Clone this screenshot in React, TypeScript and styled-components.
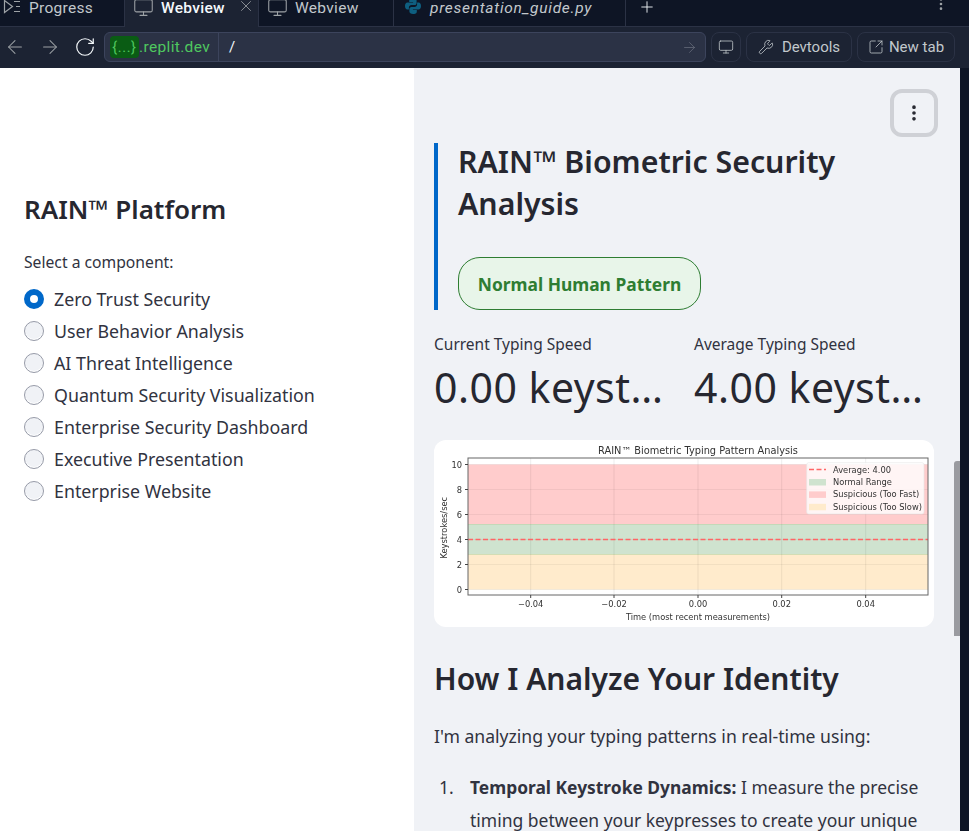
import React from "react";
import styled, { createGlobalStyle } from "styled-components";
import { ArrowLeft, ArrowRight, Monitor, RotateCw, Wrench, SquareArrowOutUpRight, Plus, X, EllipsisVertical } from "lucide-react";

const GlobalStyle = createGlobalStyle`
  html, body { margin: 0; padding: 0; height: 831px; overflow: hidden; background: #0e1525; }
  * { box-sizing: border-box; }
`;

const Shell = styled.div`
  width: 969px;
  height: 831px;
  display: flex;
  flex-direction: column;
  overflow: hidden;
  font-family: "Noto Sans", sans-serif;
`;

const TabBar = styled.div`
  height: 27px;
  flex: none;
  display: flex;
  background: #0e1525;
  border-bottom: 1px solid #2b3245;
`;

const Tab = styled.div<{ $width: number; $pad: number; $active?: boolean }>`
  width: ${(p) => p.$width}px;
  display: flex;
  align-items: flex-start;
  gap: 7px;
  padding-left: ${(p) => p.$pad}px;
  margin-bottom: ${(p) => (p.$active ? "-1px" : "0")};
  background: ${(p) => (p.$active ? "#1c2333" : "#0e1525")};
  border-right: 1px solid #2b3245;
  color: ${(p) => (p.$active ? "#f5f9fc" : "#c2c8cc")};
  font: ${(p) => (p.$active ? 500 : 400)} 15.5px/16px Roboto, sans-serif;
  letter-spacing: 0.3px;
  svg { flex: none; margin-top: -3px; }
`;

const TabLabel = styled.span<{ $italic?: boolean }>`
  flex: 1;
  font-style: ${(p) => (p.$italic ? "italic" : "normal")};
  letter-spacing: ${(p) => (p.$italic ? "0.72px" : "0.3px")};
  white-space: nowrap;
`;

const TabClose = styled(X)`
  margin-right: 3px;
  color: #9da2a6;
`;

const Spacer = styled.div`
  flex: 1;
`;

const NewTabIcon = styled(Plus)`
  margin: -2px 0 0 12px;
  color: #f5f9fc;
`;

const TabMenu = styled(EllipsisVertical)`
  margin: -4px 20px 0 0;
  color: #9da2a6;
`;

const AddressBar = styled.div`
  height: 41px;
  flex: none;
  display: flex;
  align-items: center;
  padding: 0 14px 1px 0;
  background: #1c2333;
  gap: 5px;
`;

const NavButton = styled.div<{ $bright?: boolean }>`
  width: 29px;
  margin-right: 1px;
  display: flex;
  justify-content: center;
  color: ${(p) => (p.$bright ? "#f5f9fc" : "#9da2a6")};
`;

const UrlField = styled.div`
  width: 602px;
  height: 30px;
  margin-left: -1px;
  display: flex;
  align-items: center;
  background: #2b3245;
  border: 1px solid #3c445c;
  border-radius: 6px;
  color: #f5f9fc;
  font: 400 15px Roboto, sans-serif;
`;

const Host = styled.div`
  height: 100%;
  width: 114px;
  flex: none;
  display: flex;
  align-items: center;
  padding-left: 5px;
  border-right: 1px solid #3c445c;
  color: #4fc75f;
  font-size: 15.5px;
  letter-spacing: 0.35px;
  white-space: nowrap;
`;

const HostBadge = styled.span`
  height: 22px;
  width: 29px;
  flex: none;
  display: flex;
  align-items: center;
  justify-content: center;
  background: #0a5c14;
  border-radius: 4px;
  letter-spacing: 0.6px;
  font-size: 14.5px;
`;

const Path = styled.span`
  flex: 1;
  padding-left: 10px;
`;

const GoArrow = styled(ArrowRight)`
  margin-right: 7px;
  color: #6b7280;
`;

const ChromeButton = styled.div<{ $width: number; $gap?: number }>`
  width: ${(p) => p.$width}px;
  height: 30px;
  flex: none;
  display: flex;
  align-items: center;
  justify-content: center;
  gap: ${(p) => p.$gap ?? 8}px;
  border: 1px solid #2b3245;
  border-radius: 8px;
  color: #c2c8cc;
  font: 400 15px Roboto, sans-serif;
`;

const Page = styled.div`
  flex: 1;
  min-height: 0;
  position: relative;
  display: flex;
`;

const Sidebar = styled.aside`
  width: 414px;
  flex: none;
  padding: 124px 24px 0;
  background: #fff;
  color: #31333f;
`;

const SidebarTitle = styled.h2`
  margin: 0 0 26px;
  font-size: 26px;
  line-height: 34px;
  font-weight: 600;
  color: #262730;
`;

const RadioCaption = styled.div`
  font-size: 15.7px;
  line-height: 20px;
  margin-bottom: 11px;
`;

const RadioList = styled.div`
  display: flex;
  flex-direction: column;
`;

const RadioRow = styled.label`
  height: 32px;
  display: flex;
  align-items: center;
  gap: 10px;
  font-size: 17.8px;
`;

const RadioDot = styled.span<{ $checked?: boolean }>`
  width: 20px;
  height: 20px;
  border-radius: 50%;
  background: ${(p) => (p.$checked ? "#fff" : "#f0f2f6")};
  border: ${(p) => (p.$checked ? "6px solid #0068c9" : "1px solid #979ba8")};
  box-shadow: ${(p) => (p.$checked ? "none" : "inset 0 -1px 0 #fff")};
`;

const Main = styled.main`
  flex: 1;
  min-width: 0;
  position: relative;
  padding: 75px 26px 0 20px;
  background: #f0f2f6;
  color: #262730;
`;

const FloatingMenu = styled.div`
  position: absolute;
  top: 21px;
  right: 22px;
  width: 48px;
  height: 48px;
  display: flex;
  align-items: center;
  justify-content: center;
  background: #f0f2f6;
  border: 4px solid #cfd1d6;
  border-radius: 12px;
  color: #262730;
`;

const Hero = styled.section`
  display: flow-root;
  height: 167px;
  padding-left: 20px;
  border-left: 4px solid #0068c9;
`;

const HeroTitle = styled.h1`
  margin: -2px 0 32px;
  font-size: 30.3px;
  line-height: 42px;
  font-weight: 600;
`;

const StatusPill = styled.div`
  width: 243px;
  height: 53px;
  display: flex;
  align-items: center;
  justify-content: center;
  background: #e8f5e9;
  border: 1px solid #2e7d32;
  border-radius: 22px;
  color: #2e7d32;
  font-size: 17.4px;
  font-weight: 700;
`;

const Metrics = styled.div`
  margin-top: 24px;
  display: grid;
  grid-template-columns: 228px 228px;
  column-gap: 32px;
`;

const Metric = styled.div`
  min-width: 0;
`;

const MetricLabel = styled.div`
  font-size: 15.5px;
  line-height: 21px;
  color: #31333f;
`;

const MetricValue = styled.div`
  margin-top: 6px;
  font-size: 41px;
  line-height: 52px;
  letter-spacing: 0.5px;
  white-space: nowrap;
`;

const ChartCard = styled.div`
  margin-top: 27px;
  width: 500px;
  height: 187px;
  background: #fff;
  border-radius: 12px;
  overflow: hidden;
  svg { display: block; filter: blur(0.35px); }
`;

const SectionTitle = styled.h2`
  margin: 30px 0 0;
  font-size: 30px;
  line-height: 44px;
  font-weight: 600;
`;

const Para = styled.p`
  margin: 21px 0 0;
  font-size: 17.6px;
  line-height: 28px;
  color: #31333f;
`;

const Step = styled.div`
  margin-top: 21px;
  display: grid;
  grid-template-columns: 36px 1fr;
  font-size: 17.5px;
  line-height: 33px;
  color: #31333f;
  strong { font-weight: 700; font-size: 17.4px; }
`;

const StepNumber = styled.span`
  padding-left: 5px;
`;

const Scrollbar = styled.div`
  width: 9px;
  flex: none;
  background: #0e1525;
`;

const ScrollThumb = styled.div`
  position: absolute;
  top: 393px;
  right: 9px;
  width: 6px;
  height: 175px;
  background: #9a9ba0;
  border-radius: 3px 0 0 0;
`;

const plotLeft = 34;
const plotRight = 494;
const plotTop = 18;
const plotBottom = 155;
const yForValue = (v: number) => 149.5 - v * 12.5;
const xTicks = [
  { x: 96.7, label: "−0.04" },
  { x: 180, label: "−0.02" },
  { x: 264, label: "0.00" },
  { x: 347.7, label: "0.02" },
  { x: 431.7, label: "0.04" },
];
const yTicks = [0, 2, 4, 6, 8, 10];
const legendItems = [
  { color: "#cfe3cf", label: "Normal Range" },
  { color: "#ffcccc", label: "Suspicious (Too Fast)" },
  { color: "#ffebcc", label: "Suspicious (Too Slow)" },
];

function TypingChart() {
  return (
    <svg width={500} height={187} viewBox="0 0 500 187" fontFamily="'DejaVu Sans', sans-serif" fill="#333">
      <rect x={plotLeft} y={yForValue(10)} width={460} height={60} fill="#ffcccc" />
      <rect x={plotLeft} y={yForValue(5.2)} width={460} height={30} fill="#cfe3cf" />
      <rect x={plotLeft} y={yForValue(2.8)} width={460} height={35} fill="#ffebcc" />
      <line x1={plotLeft} x2={plotRight} y1={yForValue(5.2)} y2={yForValue(5.2)} stroke="#c4d8b8" />
      <line x1={plotLeft} x2={plotRight} y1={yForValue(2.8)} y2={yForValue(2.8)} stroke="#d3ddb4" />
      {xTicks.map((t) => (
        <line key={t.x} x1={t.x} x2={t.x} y1={plotTop} y2={plotBottom} stroke="#000" strokeOpacity={0.07} />
      ))}
      {yTicks.map((v) => (
        <line key={v} x1={plotLeft} x2={plotRight} y1={yForValue(v)} y2={yForValue(v)} stroke="#000" strokeOpacity={0.05} />
      ))}
      <line x1={plotLeft} x2={plotRight} y1={yForValue(4)} y2={yForValue(4)} stroke="#ff6666" strokeWidth={1.5} strokeDasharray="5 2.5" />
      <rect x={plotLeft} y={plotTop} width={460} height={137} fill="none" stroke="#666" strokeWidth={1} />
      {yTicks.map((v) => (
        <g key={v}>
          <line x1={plotLeft - 3} x2={plotLeft} y1={yForValue(v)} y2={yForValue(v)} stroke="#444" />
          <text x={plotLeft - 6} y={yForValue(v) + 3} fontSize={8.3} textAnchor="end">{v}</text>
        </g>
      ))}
      {xTicks.map((t) => (
        <g key={t.x}>
          <line x1={t.x} x2={t.x} y1={plotBottom} y2={plotBottom + 3} stroke="#444" />
          <text x={t.x} y={plotBottom + 12} fontSize={8.3} textAnchor="middle">{t.label}</text>
        </g>
      ))}
      <text x={264} y={14} fontSize={9.8} textAnchor="middle">RAIN™ Biometric Typing Pattern Analysis</text>
      <text x={264} y={180} fontSize={8.3} textAnchor="middle">Time (most recent measurements)</text>
      <text transform="translate(13 87.7) rotate(-90)" fontSize={8.3} textAnchor="middle">Keystrokes/sec</text>
      <rect x={372.7} y={22.7} width={117.3} height={51.3} rx={2} fill="#fff" fillOpacity={0.8} stroke="#e6e6e6" strokeWidth={0.6} />
      <line x1={375} x2={392} y1={29.5} y2={29.5} stroke="#ff6666" strokeWidth={1.5} strokeDasharray="5 2.5" />
      <text x={399} y={32.5} fontSize={8.3}>Average: 4.00</text>
      {legendItems.map((item, i) => (
        <g key={item.label}>
          <rect x={375} y={39 + i * 12.4} width={17} height={6.5} fill={item.color} />
          <text x={399} y={44.8 + i * 12.4} fontSize={8.3}>{item.label}</text>
        </g>
      ))}
    </svg>
  );
}

function PythonIcon() {
  return (
    <svg width={20} height={18} viewBox="-1 0 20 18">
      <path d="M8.9 1C5.5 1 5.2 2.4 5.2 3.5V5h3.9v.6H3.4C2 5.6 1 6.8 1 9s1 3.5 2.4 3.5h1.5v-2c0-1.4 1.2-2.5 2.6-2.5h3.1c1.2 0 2-1 2-2.1V3.5C12.6 2 11.2 1 8.9 1z" fill="#0e5f80" />
      <path d="M9.1 17c3.4 0 3.7-1.4 3.7-2.5V13H8.9v-.6h5.7c1.4 0 2.4-1.2 2.4-3.4s-1-3.5-2.4-3.5h-1.5v2c0 1.4-1.2 2.5-2.6 2.5H7.4c-1.2 0-2 1-2 2.1v2.4C5.4 16 6.8 17 9.1 17z" fill="#0e5f80" />
    </svg>
  );
}

function ProgressIcon() {
  return (
    <svg width={20} height={20} viewBox="0 0 20 20" fill="none" stroke="#9da2a6" strokeWidth={1.2}>
      <path d="M2.5 3.5v12l8-6z" />
      <path d="M12 4.5h6M14 9.5h4M12 14.5h6" />
    </svg>
  );
}

const components = [
  "Zero Trust Security",
  "User Behavior Analysis",
  "AI Threat Intelligence",
  "Quantum Security Visualization",
  "Enterprise Security Dashboard",
  "Executive Presentation",
  "Enterprise Website",
];

export default function App() {
  return (
    <Shell>
      <GlobalStyle />
      <TabBar>
        <Tab $width={125} $pad={2}>
          <ProgressIcon />
          <TabLabel>Progress</TabLabel>
        </Tab>
        <Tab $width={134} $pad={8} $active>
          <Monitor size={21} strokeWidth={1.2} color="#9da2a6" />
          <TabLabel>Webview</TabLabel>
          <TabClose size={18} strokeWidth={1.1} />
        </Tab>
        <Tab $width={135} $pad={8}>
          <Monitor size={21} strokeWidth={1.2} color="#9da2a6" />
          <TabLabel>Webview</TabLabel>
        </Tab>
        <Tab $width={232} $pad={9}>
          <PythonIcon />
          <TabLabel $italic>presentation_guide.py</TabLabel>
        </Tab>
        <NewTabIcon size={18} strokeWidth={1.2} />
        <Spacer />
        <TabMenu size={16} />
      </TabBar>
      <AddressBar>
        <NavButton><ArrowLeft size={22} strokeWidth={1.1} /></NavButton>
        <NavButton><ArrowRight size={22} strokeWidth={1.1} /></NavButton>
        <NavButton $bright><RotateCw size={22} strokeWidth={1.3} /></NavButton>
        <UrlField>
          <Host><HostBadge>{"{...}"}</HostBadge>.replit.dev</Host>
          <Path>/</Path>
          <GoArrow size={17} strokeWidth={1} />
        </UrlField>
        <ChromeButton $width={30}><Monitor size={16} strokeWidth={1.2} /></ChromeButton>
        <ChromeButton $width={106}><Wrench size={16} strokeWidth={1.2} />Devtools</ChromeButton>
        <ChromeButton $width={98} $gap={5}><SquareArrowOutUpRight size={16} strokeWidth={1.2} />New tab</ChromeButton>
      </AddressBar>
      <Page>
        <Sidebar>
          <SidebarTitle>RAIN™ Platform</SidebarTitle>
          <RadioCaption>Select a component:</RadioCaption>
          <RadioList>
            {components.map((name, i) => (
              <RadioRow key={name}>
                <RadioDot $checked={i === 0} />
                {name}
              </RadioRow>
            ))}
          </RadioList>
        </Sidebar>
        <Main>
          <FloatingMenu><EllipsisVertical size={20} strokeWidth={2.4} /></FloatingMenu>
          <Hero>
            <HeroTitle>RAIN™ Biometric Security Analysis</HeroTitle>
            <StatusPill>Normal Human Pattern</StatusPill>
          </Hero>
          <Metrics>
            <Metric>
              <MetricLabel>Current Typing Speed</MetricLabel>
              <MetricValue>0.00 keyst…</MetricValue>
            </Metric>
            <Metric>
              <MetricLabel>Average Typing Speed</MetricLabel>
              <MetricValue>4.00 keyst…</MetricValue>
            </Metric>
          </Metrics>
          <ChartCard><TypingChart /></ChartCard>
          <SectionTitle>How I Analyze Your Identity</SectionTitle>
          <Para>I'm analyzing your typing patterns in real-time using:</Para>
          <Step>
            <StepNumber>1.</StepNumber>
            <div><strong>Temporal Keystroke Dynamics:</strong> I measure the precise timing between your keypresses to create your unique</div>
          </Step>
        </Main>
        <Scrollbar />
        <ScrollThumb />
      </Page>
    </Shell>
  );
}
